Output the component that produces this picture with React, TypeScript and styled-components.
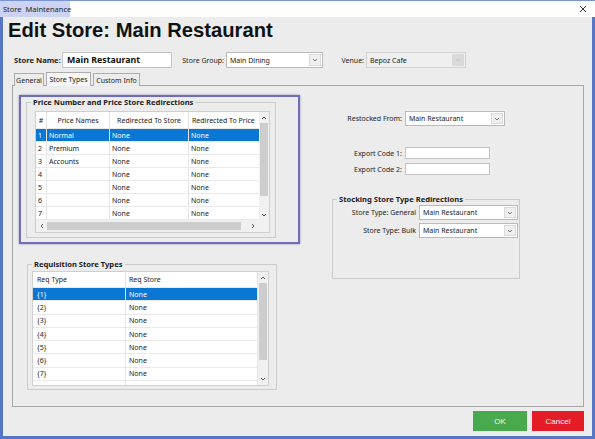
import React from 'react';
import styled, { createGlobalStyle, css } from 'styled-components';

const GlobalStyle = createGlobalStyle`
  html, body {
    margin: 0;
    padding: 0;
    background: #ffffff;
  }
  body {
    font-family: 'Noto Sans', 'Open Sans', sans-serif;
    color: #222;
  }
  * {
    box-sizing: border-box;
  }
`;

const UI_FONT = `'Noto Sans', 'Open Sans', sans-serif`;

const Window = styled.div`
  width: 595px;
  height: 439px;
  display: flex;
  flex-direction: column;
  overflow: hidden;
`;

const TitleBar = styled.div`
  height: 17px;
  flex-shrink: 0;
  display: flex;
  justify-content: space-between;
  background: #ffffff;
  border-top: 1px solid #7a93d2;
`;

const TitleText = styled.div`
  width: 70px;
  padding-left: 3px;
  background: #cdd3f2;
  font-size: 7.5px;
  line-height: 16px;
  color: #1d1d1d;
  white-space: nowrap;
`;

const CloseButton = styled.div`
  width: 24px;
  display: flex;
  align-items: center;
  justify-content: center;
`;

const Frame = styled.div`
  flex: 1;
  display: flex;
  flex-direction: column;
  padding: 0 8px 0 9px;
  background: #ececec;
  border: 3px solid #5677c5;
  border-top: none;
`;

const Heading = styled.h1`
  margin: 3px 0 0 -4px;
  font-family: 'Liberation Sans', Arial, sans-serif;
  font-weight: 700;
  font-size: 20.2px;
  line-height: 21px;
  color: #111;
  white-space: nowrap;
`;

const HeaderRow = styled.div`
  margin: 11px 0 0 2px;
  height: 16px;
  display: flex;
  align-items: center;
`;

const Label = styled.div<{ $width: number; $bold?: boolean; $right?: boolean }>`
  width: ${({ $width }) => $width}px;
  flex-shrink: 0;
  padding-right: ${({ $right }) => ($right ? 2 : 0)}px;
  text-align: ${({ $right }) => ($right ? 'right' : 'left')};
  font-family: ${UI_FONT};
  font-size: ${({ $bold }) => ($bold ? 7.6 : 7)}px;
  font-weight: ${({ $bold }) => ($bold ? 700 : 400)};
  color: #222;
  white-space: nowrap;
`;

const TextBox = styled.div<{ $width: number; $height: number; $bold?: boolean }>`
  width: ${({ $width }) => $width}px;
  height: ${({ $height }) => $height}px;
  flex-shrink: 0;
  display: flex;
  align-items: center;
  padding-left: 4px;
  background: #ffffff;
  border: 1px solid #c4c4c4;
  font-size: ${({ $bold }) => ($bold ? 8.8 : 7)}px;
  font-weight: ${({ $bold }) => ($bold ? 700 : 400)};
  color: #111;
  white-space: nowrap;
`;

const ComboBox = styled.div<{ $width: number; $height: number; $disabled?: boolean }>`
  width: ${({ $width }) => $width}px;
  height: ${({ $height }) => $height}px;
  flex-shrink: 0;
  display: flex;
  align-items: stretch;
  padding: 1px;
  background: ${({ $disabled }) => ($disabled ? '#efefef' : '#ffffff')};
  border: 1px solid ${({ $disabled }) => ($disabled ? '#d2d2d2' : '#b9b9b9')};
`;

const ComboText = styled.div`
  flex: 1;
  display: flex;
  align-items: center;
  padding-left: 2px;
  font-size: 7px;
  color: #222;
  white-space: nowrap;
  overflow: hidden;
`;

const ComboButton = styled.div<{ $disabled?: boolean }>`
  width: 12px;
  display: flex;
  align-items: center;
  justify-content: center;
  background: ${({ $disabled }) => ($disabled ? '#d9d9d9' : '#efefef')};
  border: 1px solid ${({ $disabled }) => ($disabled ? '#d9d9d9' : '#dadada')};
`;

const TabStrip = styled.div`
  margin: 4px 0 -1px 2px;
  height: 14px;
  display: flex;
  align-items: flex-end;
  gap: 2px;
  position: relative;
  z-index: 1;
`;

const Tab = styled.div<{ $width: number; $active?: boolean }>`
  width: ${({ $width }) => $width}px;
  height: ${({ $active }) => ($active ? 14 : 13)}px;
  display: flex;
  align-items: center;
  justify-content: center;
  border: 1px solid #acacac;
  border-bottom: none;
  background: ${({ $active }) => ($active ? '#f6f6f6' : '#ececec')};
  font-size: 7px;
  color: #222;
  white-space: nowrap;
`;

const TabPanel = styled.div`
  height: 322px;
  display: flex;
  padding-left: 6px;
  border: 1px solid #a7a7a7;
  background: #ececec;
`;

const LeftColumn = styled.div`
  width: 281px;
  display: flex;
  flex-direction: column;
  padding-top: 9px;
`;

const RightColumn = styled.div`
  margin-left: 32px;
  display: flex;
  flex-direction: column;
  padding-top: 25px;
`;

const Highlight = styled.div`
  width: 281px;
  height: 149px;
  padding: 5px 0 0 5px;
  border: 2px solid #6f6db9;
  box-shadow: 0 0 2px rgba(70, 70, 150, 0.55);
`;

const GroupBox = styled.div<{ $width: number; $height: number; $pad: string; $top?: number; $left?: number }>`
  position: relative;
  width: ${({ $width }) => $width}px;
  height: ${({ $height }) => $height}px;
  margin-top: ${({ $top }) => $top ?? 0}px;
  margin-left: ${({ $left }) => $left ?? 0}px;
  padding: ${({ $pad }) => $pad};
  border: 1px solid #cbcbcb;
  flex-shrink: 0;
`;

const GroupTitle = styled.div`
  position: absolute;
  top: -6px;
  left: 4px;
  padding: 0 2px;
  background: #ececec;
  font-size: 7.6px;
  font-weight: 700;
  line-height: 10px;
  color: #1b1b1b;
  white-space: nowrap;
`;

const Grid = styled.div<{ $width: number; $height: number }>`
  width: ${({ $width }) => $width}px;
  height: ${({ $height }) => $height}px;
  display: flex;
  flex-direction: column;
  border: 1px solid #cfcfcf;
  background: #ffffff;
  overflow: hidden;
`;

const GridMain = styled.div`
  flex: 1;
  display: flex;
  min-height: 0;
`;

const GridBody = styled.div`
  flex: 1;
  overflow: hidden;
`;

const GridRow = styled.div<{ $cols: string; $height: number; $selected?: boolean }>`
  display: grid;
  grid-template-columns: ${({ $cols }) => $cols};
  height: ${({ $height }) => $height}px;
  ${({ $selected }) =>
    $selected &&
    css`
      background: #0a77d5;
      color: #ffffff;
    `}
`;

const Cell = styled.div<{ $header?: boolean; $center?: boolean; $pad?: number }>`
  display: flex;
  align-items: center;
  justify-content: ${({ $center }) => ($center ? 'center' : 'flex-start')};
  padding-left: ${({ $pad }) => $pad ?? 2}px;
  border-right: 1px solid ${({ $header }) => ($header ? '#e2e2e2' : '#e6e6e6')};
  border-bottom: 1px solid #e9e9e9;
  font-size: 7px;
  white-space: nowrap;
  overflow: hidden;
  color: inherit;
`;

const VScroll = styled.div`
  width: 10px;
  display: flex;
  flex-direction: column;
  align-items: center;
  background: #f0f0f0;
`;

const ScrollArrow = styled.div<{ $size: number }>`
  width: 10px;
  height: ${({ $size }) => $size}px;
  flex-shrink: 0;
  display: flex;
  align-items: center;
  justify-content: center;
`;

const VThumb = styled.div<{ $length: number }>`
  width: 8px;
  height: ${({ $length }) => $length}px;
  background: #cdcdcd;
`;

const Track = styled.div`
  flex: 1;
`;

const HScrollRow = styled.div`
  height: 12px;
  display: flex;
  background: #f0f0f0;
`;

const HArrow = styled.div`
  width: 11px;
  display: flex;
  align-items: center;
  justify-content: center;
`;

const HThumb = styled.div<{ $length: number }>`
  width: ${({ $length }) => $length}px;
  height: 8px;
  margin-top: 2px;
  background: #cdcdcd;
`;

const FieldRow = styled.div<{ $top?: number }>`
  display: flex;
  align-items: center;
  gap: 1px;
  margin-top: ${({ $top }) => $top ?? 0}px;
`;

const Footer = styled.div`
  margin-top: 4px;
  display: flex;
  justify-content: flex-end;
  gap: 5px;
`;

const ActionButton = styled.div<{ $variant: 'ok' | 'cancel'; $width: number }>`
  width: ${({ $width }) => $width}px;
  height: 20px;
  display: flex;
  align-items: center;
  justify-content: center;
  font-family: 'Liberation Sans', Arial, sans-serif;
  font-size: 8px;
  color: #f4f4f4;
  background: ${({ $variant }) => ($variant === 'ok' ? '#48aa4c' : '#e41c27')};
`;

type Dir = 'up' | 'down' | 'left' | 'right';

const chevronPaths: Record<Dir, string> = {
  up: 'M1 4 L3 2 L5 4',
  down: 'M1 2 L3 4 L5 2',
  left: 'M4 1 L2 3 L4 5',
  right: 'M2 1 L4 3 L2 5',
};

const Chevron = ({ dir, color = '#5a5a5a' }: { dir: Dir; color?: string }) => (
  <svg width="6" height="6" viewBox="0 0 6 6">
    <path d={chevronPaths[dir]} fill="none" stroke={color} strokeWidth="1" />
  </svg>
);

const Combo = ({
  width,
  height,
  text,
  disabled,
}: {
  width: number;
  height: number;
  text: string;
  disabled?: boolean;
}) => (
  <ComboBox $width={width} $height={height} $disabled={disabled}>
    <ComboText>{text}</ComboText>
    <ComboButton $disabled={disabled}>
      <Chevron dir="down" color={disabled ? '#c4c4c4' : '#7a7a7a'} />
    </ComboButton>
  </ComboBox>
);

const priceCols = '11px 63px 79px 72px';
const priceRows = [
  ['1', 'Normal'],
  ['2', 'Premium'],
  ['3', 'Accounts'],
  ['4', ''],
  ['5', ''],
  ['6', ''],
  ['7', ''],
];

const reqCols = '93px 132px';
const reqRows = ['{1}', '{2}', '{3}', '{4}', '{5}', '{6}', '{7}', '{8}'];

const PriceGrid = () => (
  <Grid $width={235} $height={122}>
    <GridMain>
      <GridBody>
        <GridRow $cols={priceCols} $height={17}>
          <Cell $header $center $pad={0}>#</Cell>
          <Cell $header $center $pad={0}>Price Names</Cell>
          <Cell $header $center $pad={0}>Redirected To Store</Cell>
          <Cell $header $pad={3}>Redirected To Price</Cell>
        </GridRow>
        {priceRows.map(([num, name], i) => (
          <GridRow key={num} $cols={priceCols} $height={13} $selected={i === 0}>
            <Cell $pad={2}>{num}</Cell>
            <Cell>{name}</Cell>
            <Cell>None</Cell>
            <Cell>None</Cell>
          </GridRow>
        ))}
      </GridBody>
      <VScroll>
        <ScrollArrow $size={11}>
          <Chevron dir="up" />
        </ScrollArrow>
        <VThumb $length={73} />
        <Track />
        <ScrollArrow $size={11}>
          <Chevron dir="down" />
        </ScrollArrow>
      </VScroll>
    </GridMain>
    <HScrollRow>
      <HArrow>
        <Chevron dir="left" />
      </HArrow>
      <HThumb $length={194} />
      <Track />
      <HArrow>
        <Chevron dir="right" />
      </HArrow>
      <HArrow />
    </HScrollRow>
  </Grid>
);

const ReqGrid = () => (
  <Grid $width={237} $height={115}>
    <GridMain>
      <GridBody>
        <GridRow $cols={reqCols} $height={16}>
          <Cell $header $pad={4}>Req Type</Cell>
          <Cell $header $pad={3}>Req Store</Cell>
        </GridRow>
        {reqRows.map((r, i) => (
          <GridRow key={r} $cols={reqCols} $height={13.3} $selected={i === 0}>
            <Cell $pad={4}>{r}</Cell>
            <Cell $pad={3}>None</Cell>
          </GridRow>
        ))}
      </GridBody>
      <VScroll>
        <ScrollArrow $size={11}>
          <Chevron dir="up" />
        </ScrollArrow>
        <VThumb $length={77} />
        <Track />
        <ScrollArrow $size={12}>
          <Chevron dir="down" />
        </ScrollArrow>
      </VScroll>
    </GridMain>
  </Grid>
);

export default function App() {
  return (
    <>
      <GlobalStyle />
      <Window>
        <TitleBar>
          <TitleText>Store&nbsp; Maintenance</TitleText>
          <CloseButton>
            <svg width="8" height="8" viewBox="0 0 8 8">
              <path d="M1 1 L7 7 M7 1 L1 7" stroke="#333" strokeWidth="1" />
            </svg>
          </CloseButton>
        </TitleBar>
        <Frame>
          <Heading>Edit Store: Main Restaurant</Heading>
          <HeaderRow>
            <Label $width={48} $bold>
              Store Name:
            </Label>
            <TextBox $width={110} $height={16} $bold>
              Main Restaurant
            </TextBox>
            <Label $width={54} $right>
              Store Group:
            </Label>
            <Combo width={97} height={16} text="Main Dining" />
            <Label $width={43} $right>
              Venue:
            </Label>
            <Combo width={100} height={16} text="Bepoz Cafe" disabled />
          </HeaderRow>
          <TabStrip>
            <Tab $width={30}>General</Tab>
            <Tab $width={45} $active>
              Store Types
            </Tab>
            <Tab $width={47}>Custom Info</Tab>
          </TabStrip>
          <TabPanel>
            <LeftColumn>
              <Highlight>
                <GroupBox $width={250} $height={136} $pad="8px 0 0 8px">
                  <GroupTitle>Price Number and Price Store Redirections</GroupTitle>
                  <PriceGrid />
                </GroupBox>
              </Highlight>
              <GroupBox $width={250} $height={126} $pad="6px 0 0 4px" $top={20} $left={8}>
                <GroupTitle>Requisition Store Types</GroupTitle>
                <ReqGrid />
              </GroupBox>
            </LeftColumn>
            <RightColumn>
              <FieldRow>
                <Label $width={72} $right>
                  Restocked From:
                </Label>
                <Combo width={100} height={15} text="Main Restaurant" />
              </FieldRow>
              <FieldRow $top={21}>
                <Label $width={72} $right>
                  Export Code 1:
                </Label>
                <TextBox $width={85} $height={12} />
              </FieldRow>
              <FieldRow $top={4}>
                <Label $width={72} $right>
                  Export Code 2:
                </Label>
                <TextBox $width={85} $height={12} />
              </FieldRow>
              <GroupBox $width={188} $height={80} $pad="5px 0 0 0" $top={24}>
                <GroupTitle>Stocking Store Type Redirections</GroupTitle>
                <FieldRow>
                  <Label $width={85} $right>
                    Store Type: General
                  </Label>
                  <Combo width={99} height={15} text="Main Restaurant" />
                </FieldRow>
                <FieldRow $top={3}>
                  <Label $width={85} $right>
                    Store Type: Bulk
                  </Label>
                  <Combo width={99} height={15} text="Main Restaurant" />
                </FieldRow>
              </GroupBox>
            </RightColumn>
          </TabPanel>
          <Footer>
            <ActionButton $variant="ok" $width={54}>
              OK
            </ActionButton>
            <ActionButton $variant="cancel" $width={52}>
              Cancel
            </ActionButton>
          </Footer>
        </Frame>
      </Window>
    </>
  );
}
